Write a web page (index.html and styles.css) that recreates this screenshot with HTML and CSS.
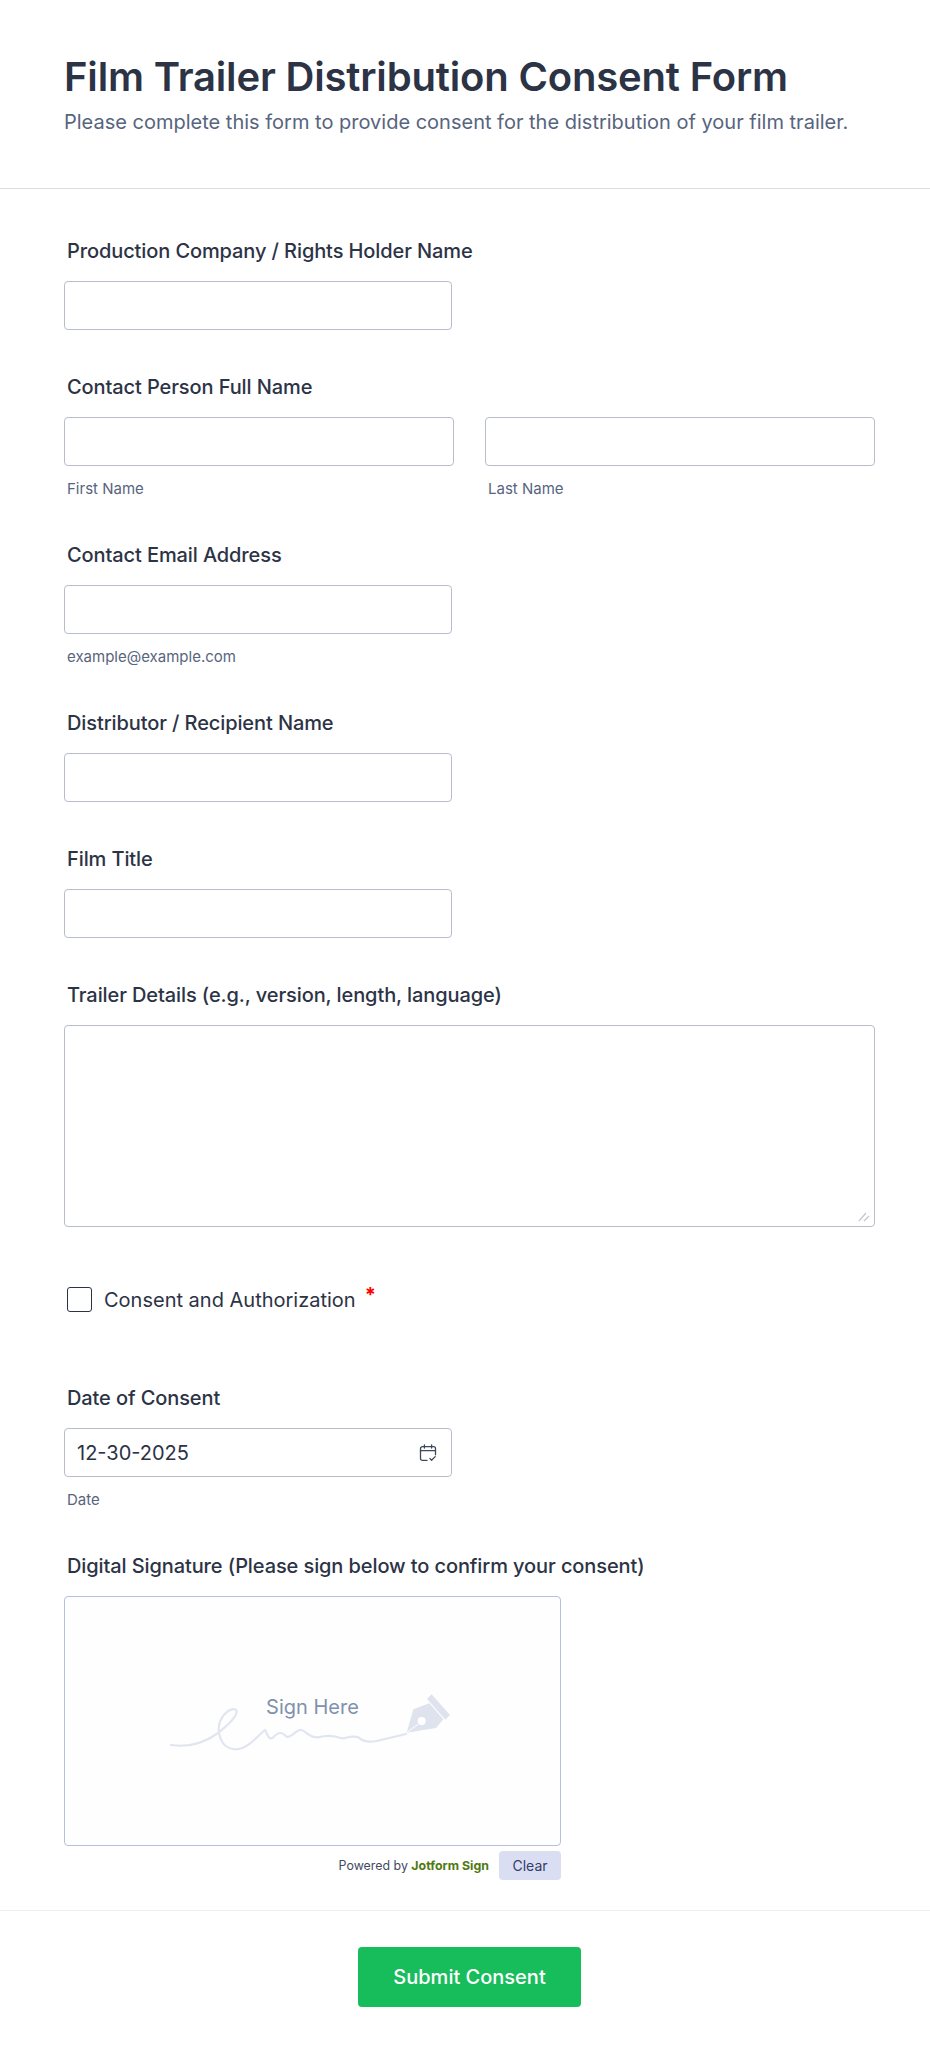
FILE: index.html
```html
<!DOCTYPE html>
<html lang="en">
<head>
  <meta charset="UTF-8">
  <title>Film Trailer Distribution Consent Form</title>
  <link rel="stylesheet" href="styles.css">
</head>
<body>

  <header class="cabecera">
    <h1>Film Trailer Distribution Consent Form</h1>
    <p>Please complete this form to provide consent for the distribution of your film trailer.</p>
  </header>

  <form class="formulario">
    <div class="campo">
      <label class="etiqueta">Production Company / Rights Holder Name</label>
      <input class="caja" type="text">
    </div>

    <div class="campo">
      <label class="etiqueta">Contact Person Full Name</label>
      <div class="nombres">
        <div>
          <input class="caja ancha" type="text">
          <span class="ayuda">First Name</span>
        </div>
        <div>
          <input class="caja ancha" type="text">
          <span class="ayuda">Last Name</span>
        </div>
      </div>
    </div>

    <div class="campo">
      <label class="etiqueta">Contact Email Address</label>
      <input class="caja" type="text">
      <span class="ayuda">example@example.com</span>
    </div>

    <div class="campo">
      <label class="etiqueta">Distributor / Recipient Name</label>
      <input class="caja" type="text">
    </div>

    <div class="campo">
      <label class="etiqueta">Film Title</label>
      <input class="caja" type="text">
    </div>

    <div class="campo">
      <label class="etiqueta">Trailer Details (e.g., version, length, language)</label>
      <div class="area-marco">
        <textarea class="caja area"></textarea>
        <svg class="agarre" width="12" height="10" viewBox="0 0 12 10" fill="none" stroke="#c3c6d0" stroke-width="1.2">
          <path d="M1 9L8 1M6 9L11 4"/>
        </svg>
      </div>
    </div>

    <div class="consentimiento">
      <input class="marca" type="checkbox">
      <span class="texto-marca">Consent and Authorization</span>
      <span class="requerido">*</span>
    </div>

    <div class="campo">
      <label class="etiqueta">Date of Consent</label>
      <div class="fecha">
        <input class="caja" type="text" value="12-30-2025">
        <svg class="icono-fecha" width="18" height="18" viewBox="0 0 18 18" fill="none" stroke="#3f4759" stroke-width="1.3" stroke-linecap="round" stroke-linejoin="round">
          <path d="M8 16.4H3.4a1.9 1.9 0 0 1-1.9-1.9V4.6a1.9 1.9 0 0 1 1.9-1.9h11.2a1.9 1.9 0 0 1 1.9 1.9v6.2"/>
          <path d="M1.5 6.6h15M5.4 1v3M12.6 1v3"/>
          <path d="M10.8 14.4l1.8 1.8 3.6-3.6"/>
        </svg>
      </div>
      <span class="ayuda">Date</span>
    </div>

    <div class="campo firma">
      <label class="etiqueta">Digital Signature (Please sign below to confirm your consent)</label>
      <div class="lienzo">
        <span class="firma-texto">Sign Here</span>
        <svg class="garabato" width="330" height="130" viewBox="0 0 990 390" fill="none">
          <path d="M63 255C110 262 160 250 200 222C235 195 262 170 260 152C255 140 225 150 210 185C200 215 210 265 255 268C295 268 325 225 345 210C350 215 355 245 370 232C385 215 395 215 410 230C425 235 440 205 455 210C470 215 480 235 505 232C530 225 550 225 575 235C590 235 605 225 625 232C640 245 655 248 680 243L768 222" stroke="#e1e5f0" stroke-width="6.5" stroke-linecap="round"/>
          <path d="M770 218L790 148L838 130L880 178L858 204Z" fill="#dfe3ee"/>
          <path d="M845 103L900 165L886 179L831 117Z" fill="#dfe3ee"/>
          <circle cx="815" cy="183" r="12" fill="#fff"/>
          <path d="M806 192L772 216" stroke="#fff" stroke-width="3"/>
        </svg>
      </div>
      <div class="pie-firma">
        <span class="powered">Powered by <b>Jotform Sign</b></span>
        <button class="limpiar" type="button">Clear</button>
      </div>
    </div>

    <div class="envio">
      <button class="enviar" type="button">Submit Consent</button>
    </div>
  </form>

</body>
</html>
```

FILE: styles.css
```css
* {
  box-sizing: border-box;
}

body {
  margin: 0;
  font-family: Inter, Arial, sans-serif;
  background-color: #fff;
  color: #2c3345;
}

.cabecera {
  height: 189px;
  padding: 50px 64px 0;
  border-bottom: 1px solid #dbdce3;
}

.cabecera h1 {
  margin: 0;
  font-size: 40px;
  line-height: 54px;
  font-weight: 600;
  letter-spacing: -0.17px;
}

.cabecera p {
  margin: 3px 0 0;
  font-size: 20px;
  line-height: 30px;
  color: #57647e;
}

.formulario {
  padding: 48px 55px 0 64px;
}

.campo {
  margin-bottom: 43px;
}

.etiqueta {
  display: block;
  margin: 0 0 16px 3px;
  font-size: 20px;
  line-height: 28px;
  font-weight: 500;
  letter-spacing: -0.1px;
}

.caja {
  display: block;
  width: 388px;
  height: 49px;
  padding: 0 12px;
  font-family: Inter, Arial, sans-serif;
  font-size: 20px;
  color: #2c3345;
  background: #fff;
  border: 1px solid #b8bdc9;
  border-radius: 4px;
}

.ayuda {
  display: block;
  margin: 14px 0 0 3px;
  font-size: 15px;
  line-height: 18px;
  color: #57647e;
}

.nombres {
  display: flex;
  gap: 31px;
}

.nombres > div {
  flex: 1;
}

.caja.ancha {
  width: 100%;
}

.area-marco {
  position: relative;
}

.area {
  width: 100%;
  height: 202px;
  resize: none;
}

.agarre {
  position: absolute;
  right: 5px;
  bottom: 5px;
}

.consentimiento {
  display: flex;
  align-items: center;
  height: 25px;
  margin: 60px 0 72px 3px;
}

.marca {
  appearance: none;
  width: 25px;
  height: 25px;
  margin: 0 12px 0 0;
  background: #fff;
  border: 1px solid #2c3345;
  border-radius: 3px;
}

.texto-marca {
  font-size: 20px;
  line-height: 28px;
}

.requerido {
  margin: -10px 0 0 9px;
  font-size: 20px;
  font-weight: 700;
  color: #f00;
}

.fecha {
  position: relative;
  width: 388px;
}

.icono-fecha {
  position: absolute;
  top: 16px;
  right: 15px;
}

.firma {
  margin-bottom: 0;
}

.lienzo {
  position: relative;
  width: 497px;
  height: 250px;
  background: #fefeff;
  border: 1px solid #b5c0dc;
  border-radius: 4px;
}

.firma-texto {
  position: absolute;
  top: 96px;
  left: 0;
  width: 100%;
  text-align: center;
  font-size: 20px;
  line-height: 28px;
  color: #8091ad;
}

.garabato {
  position: absolute;
  top: 63px;
  left: 85px;
}

.pie-firma {
  display: flex;
  justify-content: flex-end;
  align-items: center;
  gap: 10px;
  width: 497px;
  margin-top: 5px;
}

.powered {
  font-size: 12.4px;
  color: #434a60;
}

.powered b {
  color: #4f7a12;
}

.limpiar {
  width: 62px;
  height: 29px;
  padding: 0;
  font-family: Inter, Arial, sans-serif;
  font-size: 14px;
  color: #343c6a;
  background: #dadef3;
  border: 0;
  border-radius: 4px;
}

.envio {
  display: flex;
  justify-content: center;
  margin: 30px -55px 0 -64px;
  padding: 36px 55px 50px 64px;
  border-top: 1px solid #eeeef4;
}

.enviar {
  width: 223px;
  height: 60px;
  font-family: Inter, Arial, sans-serif;
  font-size: 20px;
  font-weight: 500;
  color: #fff;
  background: #18bd5b;
  border: 0;
  border-radius: 4px;
}
```
